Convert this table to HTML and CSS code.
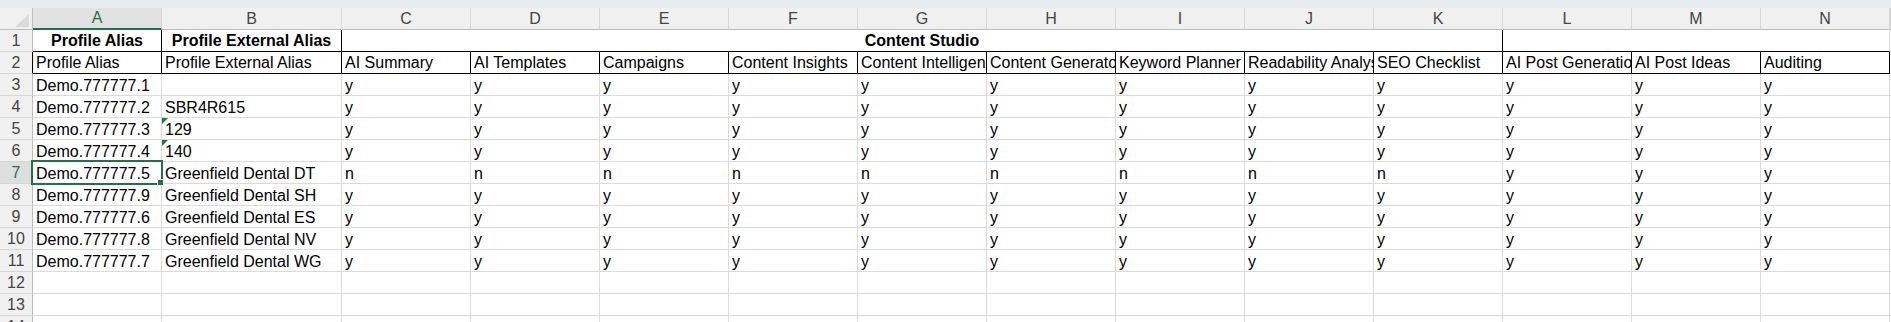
FILE: index.html
```html
<!DOCTYPE html>
<html>
<head>
<meta charset="utf-8">
<link rel="stylesheet" href="styles.css">
</head>
<body>
<div class="sheet">
  <div class="topband"></div>
  <div class="row hdr">
    <div class="corner"></div>
    <div class="sel">A</div><div>B</div><div>C</div><div>D</div><div>E</div><div>F</div><div>G</div><div>H</div><div>I</div><div>J</div><div>K</div><div>L</div><div>M</div><div>N</div><div></div>
  </div>
  <div class="row r1">
    <div class="rh">1</div>
    <div class="bold center bk-r">Profile Alias</div>
    <div class="bold center bk-r">Profile External Alias</div>
    <div class="bold center bk-r span9">Content Studio</div>
    <div class="span3"></div>
    <div class="fill"></div>
  </div>
  <div class="row r2">
    <div class="rh bk-r">2</div>
    <div>Profile Alias</div><div>Profile External Alias</div><div>AI Summary</div><div>AI Templates</div><div>Campaigns</div><div>Content Insights</div><div>Content Intelligence</div><div>Content Generator</div><div>Keyword Planner</div><div>Readability Analysis</div><div>SEO Checklist</div><div>AI Post Generation</div><div>AI Post Ideas</div><div>Auditing</div>
    <div class="fill"></div>
  </div>
  <div class="row">
    <div class="rh">3</div>
    <div>Demo.777777.1</div><div></div><div>y</div><div>y</div><div>y</div><div>y</div><div>y</div><div>y</div><div>y</div><div>y</div><div>y</div><div>y</div><div>y</div><div>y</div>
    <div class="fill"></div>
  </div>
  <div class="row">
    <div class="rh">4</div>
    <div>Demo.777777.2</div><div>SBR4R615</div><div>y</div><div>y</div><div>y</div><div>y</div><div>y</div><div>y</div><div>y</div><div>y</div><div>y</div><div>y</div><div>y</div><div>y</div>
    <div class="fill"></div>
  </div>
  <div class="row">
    <div class="rh">5</div>
    <div>Demo.777777.3</div><div class="txtnum">129</div><div>y</div><div>y</div><div>y</div><div>y</div><div>y</div><div>y</div><div>y</div><div>y</div><div>y</div><div>y</div><div>y</div><div>y</div>
    <div class="fill"></div>
  </div>
  <div class="row">
    <div class="rh">6</div>
    <div>Demo.777777.4</div><div class="txtnum">140</div><div>y</div><div>y</div><div>y</div><div>y</div><div>y</div><div>y</div><div>y</div><div>y</div><div>y</div><div>y</div><div>y</div><div>y</div>
    <div class="fill"></div>
  </div>
  <div class="row">
    <div class="rh sel">7</div>
    <div class="active">Demo.777777.5<span class="selbox"></span><span class="handle"></span></div><div>Greenfield Dental DT</div><div>n</div><div>n</div><div>n</div><div>n</div><div>n</div><div>n</div><div>n</div><div>n</div><div>n</div><div>y</div><div>y</div><div>y</div>
    <div class="fill"></div>
  </div>
  <div class="row">
    <div class="rh">8</div>
    <div>Demo.777777.9</div><div>Greenfield Dental SH</div><div>y</div><div>y</div><div>y</div><div>y</div><div>y</div><div>y</div><div>y</div><div>y</div><div>y</div><div>y</div><div>y</div><div>y</div>
    <div class="fill"></div>
  </div>
  <div class="row">
    <div class="rh">9</div>
    <div>Demo.777777.6</div><div>Greenfield Dental ES</div><div>y</div><div>y</div><div>y</div><div>y</div><div>y</div><div>y</div><div>y</div><div>y</div><div>y</div><div>y</div><div>y</div><div>y</div>
    <div class="fill"></div>
  </div>
  <div class="row">
    <div class="rh">10</div>
    <div>Demo.777777.8</div><div>Greenfield Dental NV</div><div>y</div><div>y</div><div>y</div><div>y</div><div>y</div><div>y</div><div>y</div><div>y</div><div>y</div><div>y</div><div>y</div><div>y</div>
    <div class="fill"></div>
  </div>
  <div class="row">
    <div class="rh">11</div>
    <div>Demo.777777.7</div><div>Greenfield Dental WG</div><div>y</div><div>y</div><div>y</div><div>y</div><div>y</div><div>y</div><div>y</div><div>y</div><div>y</div><div>y</div><div>y</div><div>y</div>
    <div class="fill"></div>
  </div>
  <div class="row">
    <div class="rh">12</div>
    <div></div><div></div><div></div><div></div><div></div><div></div><div></div><div></div><div></div><div></div><div></div><div></div><div></div><div></div>
    <div class="fill"></div>
  </div>
  <div class="row">
    <div class="rh">13</div>
    <div></div><div></div><div></div><div></div><div></div><div></div><div></div><div></div><div></div><div></div><div></div><div></div><div></div><div></div>
    <div class="fill"></div>
  </div>
  <div class="row">
    <div class="rh">14</div>
    <div></div><div></div><div></div><div></div><div></div><div></div><div></div><div></div><div></div><div></div><div></div><div></div><div></div><div></div>
    <div class="fill"></div>
  </div>
</div>
</body>
</html>
```

FILE: styles.css
```css
html, body {
  margin: 0;
  padding: 0;
}
body {
  width: 1891px;
  height: 322px;
  overflow: hidden;
  background: #ffffff;
  font-family: "Liberation Sans", Arial, sans-serif;
}
.sheet {
  width: 1891px;
}
.topband {
  height: 8px;
  background: #e7ecf0;
}
.row {
  display: grid;
  grid-template-columns: 33px 129px 180px repeat(12, 129px) 1fr;
  height: 22px;
}
.row > div {
  box-sizing: border-box;
  height: 22px;
  border-right: 1px solid #dadada;
  border-bottom: 1px solid #dadada;
  padding: 3px 3px 0 3px;
  font-size: 16px;
  line-height: 18px;
  color: #000;
  white-space: nowrap;
  overflow: hidden;
}
.hdr > div {
  background: #f0f0f0;
  color: #444;
  font-size: 16px;
  line-height: 21px;
  padding: 0;
  text-align: center;
  border-right-color: #d6d6d6;
  border-bottom-color: #bebebe;
}
.hdr > div.sel {
  background: #e2e2e2;
  color: #217346;
  border-bottom: 2px solid #217346;
  line-height: 20px;
}
.hdr > .corner {
  position: relative;
  border-right-color: #bebebe;
}
.corner::after {
  content: "";
  position: absolute;
  right: 3px;
  bottom: 2px;
  width: 14px;
  height: 13px;
  background: #dadada;
  clip-path: polygon(100% 0, 100% 100%, 0 100%);
}
.row > .rh {
  background: #f0f0f0;
  color: #444;
  font-size: 16px;
  line-height: 21px;
  padding: 0;
  text-align: center;
  border-right-color: #bebebe;
  border-bottom-color: #d6d6d6;
}
.row > .rh.sel {
  background: #dedede;
  color: #217346;
}
.r1 > div,
.r2 > div {
  padding-top: 2px;
}
.r1 > div {
  border-bottom-color: #000;
}
.r1 > .rh {
  border-bottom-color: #d6d6d6;
}
.r2 > div {
  border-right-color: #000;
  border-bottom-color: #000;
}
.r2 > .rh {
  border-bottom-color: #d6d6d6;
  padding-top: 0;
}
.r1 > .rh {
  padding-top: 0;
}
.row > .bk-r {
  border-right-color: #000;
}
.row > .fill {
  border-right: none;
}
.r2 > .fill {
  border-right: none;
  border-bottom-color: #dadada;
}
.r1 > .fill {
  border-bottom-color: #dadada;
}
.bold {
  font-weight: bold;
}
.center {
  text-align: center;
}
.span9 {
  grid-column: span 9;
}
.span3 {
  grid-column: span 3;
}
.row > .txtnum {
  position: relative;
}
.txtnum::before {
  content: "";
  position: absolute;
  left: 0;
  top: 0;
  width: 6px;
  height: 6px;
  background: #1f7a3c;
  clip-path: polygon(0 0, 100% 0, 0 100%);
}
.row > .active {
  position: relative;
  overflow: visible;
}
.selbox {
  position: absolute;
  left: -2px;
  top: -2px;
  width: 132px;
  height: 25px;
  box-sizing: border-box;
  border: 2px solid #217346;
  z-index: 2;
}
.handle {
  position: absolute;
  left: 125px;
  top: 18px;
  width: 5px;
  height: 5px;
  background: #217346;
  outline: 1px solid #fff;
  z-index: 3;
}
```
